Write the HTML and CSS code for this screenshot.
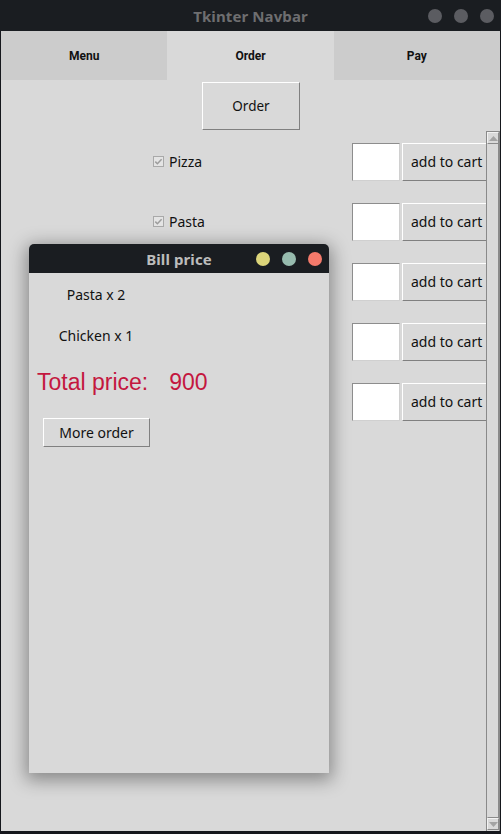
FILE: index.html
```html
<!DOCTYPE html>
<html lang="en">
<head>
<meta charset="utf-8">
<title>Tkinter Navbar</title>
<link rel="stylesheet" href="styles.css">
</head>
<body>
<div class="screen">
  <header class="titlebar">
    <span></span>
    <span class="title">Tkinter Navbar</span>
    <div class="dots">
      <span class="dot"></span><span class="dot"></span><span class="dot"></span>
    </div>
  </header>
  <div class="frame">
    <nav class="tabs">
      <div class="tab">Menu</div>
      <div class="tab active">Order</div>
      <div class="tab">Pay</div>
    </nav>
    <main class="content">
      <div class="order-bar">
        <button class="tk-btn order-btn">Order</button>
      </div>
      <div class="list-area">
        <div class="list">
          <div class="row">
            <label class="check"><svg class="box" width="11" height="11" viewBox="0 0 11 11"><rect x="0.5" y="0.5" width="10" height="10" fill="#e4e4e4" stroke="#a9a9a9"/><path d="M2.3 5.6 L4.4 7.7 L8.6 3.2" fill="none" stroke="#9c9c9c" stroke-width="1.5"/></svg><span>Pizza</span></label>
            <div class="entry"></div>
            <button class="tk-btn cart-btn">add to cart</button>
          </div>
          <div class="row">
            <label class="check"><svg class="box" width="11" height="11" viewBox="0 0 11 11"><rect x="0.5" y="0.5" width="10" height="10" fill="#e4e4e4" stroke="#a9a9a9"/><path d="M2.3 5.6 L4.4 7.7 L8.6 3.2" fill="none" stroke="#9c9c9c" stroke-width="1.5"/></svg><span>Pasta</span></label>
            <div class="entry"></div>
            <button class="tk-btn cart-btn">add to cart</button>
          </div>
          <div class="row">
            <div class="check"><svg class="box" width="11" height="11" viewBox="0 0 11 11"><rect x="0.5" y="0.5" width="10" height="10" fill="#e4e4e4" stroke="#a9a9a9"/></svg></div>
            <div class="entry"></div>
            <button class="tk-btn cart-btn">add to cart</button>
          </div>
          <div class="row">
            <div class="check"><svg class="box" width="11" height="11" viewBox="0 0 11 11"><rect x="0.5" y="0.5" width="10" height="10" fill="#e4e4e4" stroke="#a9a9a9"/></svg></div>
            <div class="entry"></div>
            <button class="tk-btn cart-btn">add to cart</button>
          </div>
          <div class="row">
            <div class="check"><svg class="box" width="11" height="11" viewBox="0 0 11 11"><rect x="0.5" y="0.5" width="10" height="10" fill="#e4e4e4" stroke="#a9a9a9"/></svg></div>
            <div class="entry"></div>
            <button class="tk-btn cart-btn">add to cart</button>
          </div>
        </div>
        <div class="scrollbar">
          <div class="arrow up"><svg width="9" height="5" viewBox="0 0 9 5"><path d="M0 5 L4.5 0 L9 5 Z" fill="#a3a3a3"/></svg></div>
          <div class="thumb"></div>
          <div class="arrow down"><svg width="9" height="5" viewBox="0 0 9 5"><path d="M0 0 L4.5 5 L9 0 Z" fill="#a3a3a3"/></svg></div>
        </div>
      </div>
    </main>
  </div>

  <section class="bill">
    <header class="titlebar bill-title">
      <span></span>
      <span class="title">Bill price</span>
      <div class="dots">
        <span class="dot yellow"></span><span class="dot teal"></span><span class="dot red"></span>
      </div>
    </header>
    <div class="bill-body">
      <div class="bill-item first">Pasta x 2</div>
      <div class="bill-item second">Chicken x 1</div>
      <div class="total"><span class="label">Total price:</span><span class="amount">900</span></div>
      <button class="tk-btn more-btn">More order</button>
    </div>
  </section>
</div>
</body>
</html>
```

FILE: styles.css
```css
* { box-sizing: border-box; }

html, body {
  margin: 0;
  padding: 0;
  background: #15171c;
  overflow: hidden;
}

.screen {
  position: relative;
  width: 501px;
  height: 834px;
  display: flex;
  flex-direction: column;
  background: #15171c;
  font-family: "Noto Sans", "Open Sans", sans-serif;
}

.titlebar {
  height: 31px;
  flex: 0 0 31px;
  background: #1a1d21;
  display: grid;
  grid-template-columns: 1fr auto 1fr;
  align-items: center;
}

.title {
  font-family: "Noto Sans", sans-serif;
  font-weight: 700;
  font-size: 15px;
  color: #6e6e70;
  letter-spacing: 0.1px;
}

.dots {
  justify-self: end;
  display: flex;
  gap: 12px;
  padding-right: 7px;
}

.dot {
  width: 14px;
  height: 14px;
  border-radius: 50%;
  background: #5b5c61;
}

.frame {
  flex: 1;
  display: flex;
  flex-direction: column;
  border-left: 1px solid #15171c;
  border-right: 1px solid #15171c;
  border-bottom: 3px solid #15171c;
  min-height: 0;
}

.tabs {
  height: 49px;
  flex: 0 0 49px;
  display: grid;
  grid-template-columns: 1fr 1fr 1fr;
}

.tab {
  background: #cccccc;
  display: flex;
  align-items: center;
  justify-content: center;
  font-family: Roboto, "Noto Sans", sans-serif;
  font-weight: 700;
  font-size: 12px;
  color: #111;
}

.tab.active {
  background: #d9d9d9;
}

.content {
  flex: 1;
  background: #d9d9d9;
  display: flex;
  flex-direction: column;
  min-height: 0;
}

.order-bar {
  display: flex;
  justify-content: center;
  padding: 2px 0 1px;
  padding-left: 1px;
}

.tk-btn {
  background: #d9d9d9;
  border: 1px solid;
  border-color: #ffffff #808080 #808080 #ffffff;
  font-family: "Noto Sans", "Open Sans", sans-serif;
  font-size: 14px;
  color: #111;
  padding: 0;
  margin: 0;
}

.order-btn {
  width: 98px;
  height: 48px;
  font-size: 13.5px;
  padding-bottom: 1px;
}

.list-area {
  flex: 1;
  display: flex;
  min-height: 0;
}

.list {
  flex: 1;
  overflow: hidden;
  padding-top: 12px;
  display: flex;
  flex-direction: column;
  gap: 22px;
}

.row {
  height: 38px;
  display: grid;
  grid-template-columns: 349px 48px 90px;
  column-gap: 2px;
  align-items: center;
}

.check {
  display: flex;
  align-items: center;
  gap: 5px;
  padding-left: 152px;
  font-size: 14px;
  color: #111;
  margin-top: -2px;
}

.box { display: block; flex: 0 0 11px; }

.entry {
  height: 38px;
  background: #ffffff;
  border: 1px solid;
  border-color: #8d8d8d #d0d0d0 #d0d0d0 #8d8d8d;
}

.cart-btn {
  height: 38px;
  text-align: left;
  padding-left: 8px;
  padding-bottom: 2px;
  white-space: nowrap;
}

.scrollbar {
  width: 14px;
  flex: 0 0 14px;
  border: 1px solid #8a8a8a;
  border-bottom: none;
  display: flex;
  flex-direction: column;
  background: #d9d9d9;
}

.arrow {
  height: 12px;
  flex: 0 0 12px;
  display: flex;
  align-items: center;
  justify-content: center;
  border: 1px solid;
  border-color: #f2f2f2 #8a8a8a #8a8a8a #f2f2f2;
}

.thumb {
  flex: 1;
  border: 1px solid;
  border-color: #f2f2f2 #8a8a8a #8a8a8a #f2f2f2;
  border-left-color: #d9d9d9;
  border-top: none;
}

.arrow.down {
  margin-bottom: 1px;
}

/* Bill price window */
.bill {
  position: absolute;
  left: 29px;
  top: 244px;
  width: 300px;
  height: 529px;
  display: flex;
  flex-direction: column;
  border-radius: 5px 5px 0 0;
  box-shadow: 0 4px 18px 3px rgba(0, 0, 0, 0.38);
  background: #d9d9d9;
}

.bill-title {
  height: 29px;
  flex: 0 0 29px;
  border-radius: 5px 5px 0 0;
}

.bill-title .title {
  color: #bcbcbc;
}

.dot.yellow { background: #dcd57a; }
.dot.teal { background: #97bbae; }
.dot.red { background: #f47a6b; }

.bill-body {
  flex: 1;
  display: flex;
  flex-direction: column;
  align-items: flex-start;
  font-size: 14px;
  color: #111;
}

.bill-item {
  width: 134px;
  text-align: center;
  line-height: 20px;
}

.bill-item.first { margin-top: 12px; }
.bill-item.second { margin-top: 21px; }

.total {
  margin-top: 23px;
  padding-left: 8px;
  font-family: "Liberation Sans", Arial, sans-serif;
  font-size: 23px;
  line-height: 26px;
  height: 26px;
  color: #c4173f;
  display: flex;
  align-items: center;
  gap: 21px;
  white-space: nowrap;
}

.total .label,
.total .amount {
  display: block;
  line-height: 26px;
}

.more-btn {
  margin-top: 23px;
  margin-left: 14px;
  width: 107px;
  height: 29px;
}
```
